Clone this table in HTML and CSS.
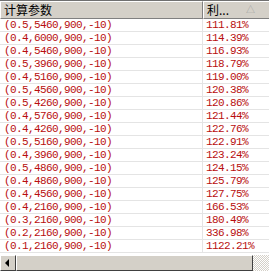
FILE: index.html
```html
<!DOCTYPE html>
<html>
<head>
<meta charset="utf-8">
<link rel="stylesheet" href="styles.css">
</head>
<body>
<div class="listview">
  <div class="header">
    <div class="hcell c1">计算参数</div>
    <div class="hcell c2"><span>利...</span><span class="sort">△</span></div>
  </div>
  <div class="rows">
    <div class="row"><div class="cell c1">(0.5,5460,900,-10)</div><div class="cell c2">111.81%</div></div>
    <div class="row"><div class="cell c1">(0.4,6000,900,-10)</div><div class="cell c2">114.39%</div></div>
    <div class="row"><div class="cell c1">(0.4,5460,900,-10)</div><div class="cell c2">116.93%</div></div>
    <div class="row"><div class="cell c1">(0.5,3960,900,-10)</div><div class="cell c2">118.79%</div></div>
    <div class="row"><div class="cell c1">(0.4,5160,900,-10)</div><div class="cell c2">119.00%</div></div>
    <div class="row"><div class="cell c1">(0.5,4560,900,-10)</div><div class="cell c2">120.38%</div></div>
    <div class="row"><div class="cell c1">(0.5,4260,900,-10)</div><div class="cell c2">120.86%</div></div>
    <div class="row"><div class="cell c1">(0.4,5760,900,-10)</div><div class="cell c2">121.44%</div></div>
    <div class="row"><div class="cell c1">(0.4,4260,900,-10)</div><div class="cell c2">122.76%</div></div>
    <div class="row"><div class="cell c1">(0.5,5160,900,-10)</div><div class="cell c2">122.91%</div></div>
    <div class="row"><div class="cell c1">(0.4,3960,900,-10)</div><div class="cell c2">123.24%</div></div>
    <div class="row"><div class="cell c1">(0.5,4860,900,-10)</div><div class="cell c2">124.15%</div></div>
    <div class="row"><div class="cell c1">(0.4,4860,900,-10)</div><div class="cell c2">125.79%</div></div>
    <div class="row"><div class="cell c1">(0.4,4560,900,-10)</div><div class="cell c2">127.75%</div></div>
    <div class="row"><div class="cell c1">(0.4,2160,900,-10)</div><div class="cell c2">166.53%</div></div>
    <div class="row"><div class="cell c1">(0.3,2160,900,-10)</div><div class="cell c2">180.49%</div></div>
    <div class="row"><div class="cell c1">(0.2,2160,900,-10)</div><div class="cell c2">336.98%</div></div>
    <div class="row"><div class="cell c1">(0.1,2160,900,-10)</div><div class="cell c2">1122.21%</div></div>
  </div>
  <div class="hscroll">
    <div class="arrow"><svg width="14" height="14" viewBox="0 0 14 14"><path d="M4 7 L8 3 L8 11 Z" fill="#000"/></svg></div>
    <div class="thumb"></div>
    <div class="grip"></div>
  </div>
</div>
</body>
</html>
```

FILE: styles.css
```css
html, body {
  margin: 0;
  padding: 0;
  background: #ffffff;
}

.listview {
  width: 269px;
  height: 271px;
  display: flex;
  flex-direction: column;
  overflow: hidden;
  font-family: "Liberation Mono", "Noto Sans CJK SC", monospace;
  font-size: 11px;
  letter-spacing: -0.6px;
}

.header {
  display: flex;
  height: 19px;
  flex: none;
  background: #d4d0c8;
  border-top: 1px solid #707070;
  box-sizing: border-box;
  overflow: hidden;
}

.hcell {
  flex: none;
  box-sizing: border-box;
  height: 18px;
  border-top: 1px solid #ffffff;
  border-left: 1px solid #ffffff;
  border-right: 1px solid #808080;
  border-bottom: 1px solid #808080;
  font-family: "Noto Sans CJK SC", sans-serif;
  font-size: 12px;
  letter-spacing: 0;
  line-height: 14px;
  color: #000;
  padding-left: 3px;
  display: flex;
  align-items: center;
}

.hcell.c1 { width: 203px; }
.hcell.c2 { width: 80px; padding-left: 3px; }
.hcell .sort {
  margin-left: 17px;
  font-size: 9px;
  color: #a0a0a0;
}

.rows {
  flex: 1;
  display: flex;
  flex-direction: column;
}

.row {
  display: flex;
  height: 13px;
  flex: none;
  border-bottom: 1px solid #e4e4e4;
  box-sizing: border-box;
  color: #b80e0e;
  line-height: 12px;
  overflow: hidden;
}

.cell {
  flex: none;
  box-sizing: border-box;
  white-space: nowrap;
  padding-left: 4px;
}

.cell.c1 {
  width: 203px;
  border-right: 1px solid #e4e4e4;
}

.cell.c2 {
  width: 80px;
  padding-left: 3px;
}

.hscroll {
  display: flex;
  height: 16px;
  flex: none;
  background: #ececec;
}

.arrow {
  width: 16px;
  height: 16px;
  box-sizing: border-box;
  background: #d4d0c8;
  border-top: 1px solid #ffffff;
  border-left: 1px solid #ffffff;
  border-right: 1px solid #404040;
  border-bottom: 1px solid #404040;
  display: flex;
  align-items: center;
  justify-content: center;
}

.arrow svg { display: block; }

.thumb {
  flex: 1;
  height: 16px;
  box-sizing: border-box;
  background: #d4d0c8;
  border-top: 1px solid #ffffff;
  border-left: 1px solid #ffffff;
  border-right: 1px solid #404040;
  border-bottom: 1px solid #404040;
}

.grip {
  width: 16px;
  height: 16px;
  background-color: #ffffff;
  background-image: repeating-conic-gradient(#d4d0c8 0 25%, #ffffff 0 50%);
  background-size: 2px 2px;
}
```
